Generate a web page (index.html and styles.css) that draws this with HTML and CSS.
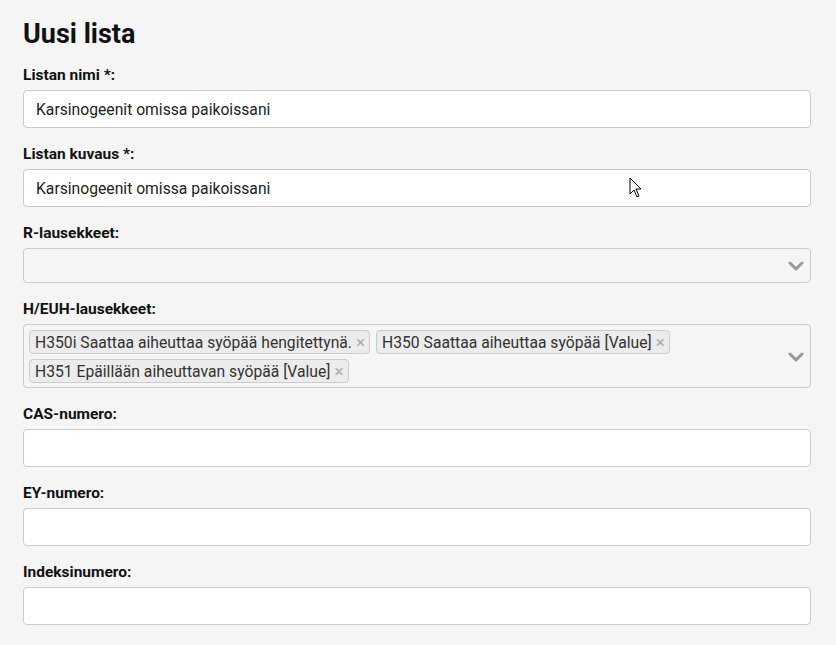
FILE: index.html
```html
<!DOCTYPE html>
<html lang="fi">
<head>
<meta charset="utf-8">
<title>Uusi lista</title>
<link rel="stylesheet" href="styles.css">
</head>
<body>
<main class="page">
  <h1 class="title">Uusi lista</h1>
  <form class="form">
    <div class="group">
      <label class="label">Listan nimi *:</label>
      <div class="input"><span class="value">Karsinogeenit omissa paikoissani</span></div>
    </div>
    <div class="group">
      <label class="label">Listan kuvaus *:</label>
      <div class="input"><span class="value">Karsinogeenit omissa paikoissani</span></div>
    </div>
    <div class="group">
      <label class="label">R-lausekkeet:</label>
      <div class="select select-empty">
        <div class="chips"></div>
        <svg class="chevron" viewBox="0 0 16 10" width="16" height="10"><path d="M2 2 L8 8 L14 2" fill="none" stroke="#999" stroke-width="3" stroke-linecap="round" stroke-linejoin="round"/></svg>
      </div>
    </div>
    <div class="group">
      <label class="label">H/EUH-lausekkeet:</label>
      <div class="select">
        <div class="chips">
          <span class="chip">H350i Saattaa aiheuttaa syöpää hengitettynä.<span class="x">×</span></span>
          <span class="chip">H350 Saattaa aiheuttaa syöpää [Value]<span class="x">×</span></span>
          <span class="chip">H351 Epäillään aiheuttavan syöpää [Value]<span class="x">×</span></span>
        </div>
        <svg class="chevron" viewBox="0 0 16 10" width="16" height="10"><path d="M2 2 L8 8 L14 2" fill="none" stroke="#999" stroke-width="3" stroke-linecap="round" stroke-linejoin="round"/></svg>
      </div>
    </div>
    <div class="group">
      <label class="label">CAS-numero:</label>
      <div class="input"></div>
    </div>
    <div class="group">
      <label class="label">EY-numero:</label>
      <div class="input"></div>
    </div>
    <div class="group">
      <label class="label">Indeksinumero:</label>
      <div class="input"></div>
    </div>
  </form>
</main>
<svg class="cursor" width="14" height="22" viewBox="0 0 14 22"><path d="M1 1 L1 17 L5 13 L8 20 L10 19 L7 12 L12 12 Z" fill="#fff" stroke="#000" stroke-width="1" stroke-linejoin="round"/></svg>
</body>
</html>
```
FILE: styles.css
```css
html, body {
  margin: 0;
  padding: 0;
  background: #f5f5f5;
  font-family: Roboto, "Liberation Sans", sans-serif;
  color: #111;
}
.page {
  padding: 16px 25px 0 23px;
}
.title {
  margin: 0 0 13px 0;
  font-size: 27px;
  line-height: 36px;
  font-weight: 700;
  color: #111;
}
.form {
  display: flex;
  flex-direction: column;
  gap: 16px;
}
.group {
  display: flex;
  flex-direction: column;
  gap: 4px;
}
.label {
  font-size: 15.5px;
  line-height: 21px;
  font-weight: 700;
  color: #111;
}
.input {
  box-sizing: border-box;
  height: 38px;
  background: #fff;
  border: 1px solid #ccc;
  border-radius: 4px;
  display: flex;
  align-items: center;
  padding: 0 12px;
  font-size: 15.7px;
  color: #222;
}
.select {
  box-sizing: border-box;
  min-height: 35px;
  border: 1px solid #ccc;
  border-radius: 4px;
  display: flex;
  align-items: center;
  padding: 5px 6px 4px 5px;
}
.chips {
  flex: 1;
  display: flex;
  flex-wrap: wrap;
  gap: 5px 6px;
}
.chip {
  box-sizing: border-box;
  height: 24px;
  display: inline-flex;
  align-items: center;
  padding: 0 4px 0 5px;
  background: #ececec;
  border: 1px solid #ccc;
  border-radius: 4px;
  font-size: 15.7px;
  color: #333;
}
.x {
  margin-left: 4px;
  color: #aaa;
  font-size: 17px;
}
.chevron {
  flex: none;
  margin-left: 8px;
}
.cursor {
  position: absolute;
  left: 629px;
  top: 177px;
}
```
